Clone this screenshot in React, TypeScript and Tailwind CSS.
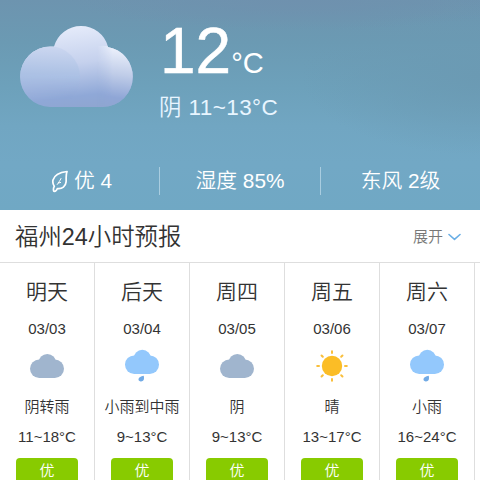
type Weather = "cloud" | "rain" | "sun";

interface Day {
  name: string;
  date: string;
  icon: Weather;
  text: string;
  temp: string;
}

const days: Day[] = [
  { name: "明天", date: "03/03", icon: "cloud", text: "阴转雨", temp: "11~18°C" },
  { name: "后天", date: "03/04", icon: "rain", text: "小雨到中雨", temp: "9~13°C" },
  { name: "周四", date: "03/05", icon: "cloud", text: "阴", temp: "9~13°C" },
  { name: "周五", date: "03/06", icon: "sun", text: "晴", temp: "13~17°C" },
  { name: "周六", date: "03/07", icon: "rain", text: "小雨", temp: "16~24°C" },
];

function WeatherIcon({ kind }: { kind: Weather }) {
  if (kind === "sun") {
    return (
      <svg width="38" height="36" viewBox="0 0 38 36">
        <circle cx="19" cy="18" r="10.200" fill="#fbbd26" />
        <g stroke="#f9bf3c" strokeWidth="2" strokeLinecap="round">
          {[0, 45, 90, 135, 180, 225, 270, 315].map((a) => (
            <path key={a} d="M19 5V3.200" transform={`rotate(${a} 19 18)`} />
          ))}
        </g>
      </svg>
    );
  }
  const rain = kind === "rain";
  return (
    <svg width="38" height="36" viewBox="0 0 38 36">
      <g transform={rain ? "translate(0 -2.600)" : "translate(0 1.500)"} fill={rain ? "#93c8fc" : "#a0b5ce"}>
        <circle cx="19.300" cy="13.200" r="8.800" />
        <rect x="2" y="10" width="34" height="18.500" rx="9.200" />
      </g>
      {rain && <path d="M20.700 27.700c1 3.600-.4 6-3.100 5.700-3.400-.5-3-4.700 3.100-5.700z" fill="#71aae5" />}
    </svg>
  );
}

function BigCloud() {
  return (
    <svg width="116" height="86" viewBox="18 24 116 86">
      <defs>
        <linearGradient id="mid" gradientUnits="userSpaceOnUse" x1="74" y1="26" x2="84" y2="108">
          <stop offset="0" stopColor="#e5ebfa" />
          <stop offset=".45" stopColor="#c5d1ed" />
          <stop offset=".85" stopColor="#8fa8d7" />
          <stop offset="1" stopColor="#8fa6d1" />
        </linearGradient>
        <linearGradient id="left" gradientUnits="userSpaceOnUse" x1="52" y1="46" x2="50" y2="108">
          <stop offset="0" stopColor="#ccd7f0" />
          <stop offset=".5" stopColor="#a9bfe3" />
          <stop offset=".8" stopColor="#8ea7d7" />
          <stop offset="1" stopColor="#8fa6d1" />
        </linearGradient>
        <linearGradient id="right" gradientUnits="userSpaceOnUse" x1="116" y1="46" x2="108" y2="108">
          <stop offset="0" stopColor="#eff3fd" />
          <stop offset=".45" stopColor="#bfcce8" />
          <stop offset=".82" stopColor="#8fa6d6" />
          <stop offset="1" stopColor="#8fa6d1" />
        </linearGradient>
        <linearGradient id="rightFade" gradientUnits="userSpaceOnUse" x1="97" y1="0" x2="113" y2="0">
          <stop offset="0" stopColor="#000" />
          <stop offset="1" stopColor="#fff" />
        </linearGradient>
        <linearGradient id="leftFade" gradientUnits="userSpaceOnUse" x1="0" y1="74" x2="0" y2="100">
          <stop offset="0" stopColor="#fff" />
          <stop offset="1" stopColor="#000" />
        </linearGradient>
        <mask id="rightMask" maskUnits="userSpaceOnUse" x="18" y="24" width="116" height="86">
          <rect x="18" y="24" width="116" height="86" fill="url(#rightFade)" />
        </mask>
        <mask id="leftMask" maskUnits="userSpaceOnUse" x="18" y="24" width="116" height="86">
          <rect x="18" y="24" width="116" height="86" fill="url(#leftFade)" />
        </mask>
        <clipPath id="body">
          <circle cx="81" cy="54" r="28" />
          <circle cx="50.500" cy="76.700" r="30.300" />
          <circle cx="102.500" cy="76.700" r="30.300" />
          <rect x="50" y="62" width="53" height="45" />
        </clipPath>
      </defs>
      <g clipPath="url(#body)">
        <rect x="18" y="24" width="116" height="86" fill="url(#mid)" />
        <circle cx="102.500" cy="76.700" r="31" fill="url(#right)" mask="url(#rightMask)" />
        <circle cx="49.500" cy="76.700" r="30.500" fill="url(#left)" mask="url(#leftMask)" />
      </g>
    </svg>
  );
}

function Leaf() {
  return (
    <svg className="mt-0.5" width="18" height="23" viewBox="0 0 18 23" fill="none" stroke="#fff" strokeWidth="1.700" strokeLinecap="round" strokeLinejoin="round">
      <path d="M16 1.500C10 2.200 3.500 4.500 2 10c-.5 2.500-.1 4.400 1.300 6.200C2.200 18 2.200 19.500 2.800 21.300c1.300.4 2.700-.6 3.600-2.800 4.800.7 8.300-2.300 8.700-6.700.3-3.500-.5-6.500.9-10.300z" />
      <path d="M6.200 14.500c1.300-1.800 2.600-3.500 3.800-6M7.200 13l2.400-.5" strokeWidth="1" />
    </svg>
  );
}

export default function App() {
  return (
    <div className="h-[480px] w-[480px] overflow-hidden bg-white font-['Liberation_Sans','Noto_Sans_CJK_SC',sans-serif] font-[350] text-[#333]">
      <header className="flex h-[210px] flex-col bg-[radial-gradient(ellipse_230px_30px_at_300px_0px,#6f91ae_0%,transparent_100%),radial-gradient(ellipse_180px_80px_at_480px_75px,#6b9ab3_0%,transparent_100%),linear-gradient(180deg,#6d94af_0%,#6b9ab3_20%,#6da1bb_42%,#71a6c2_60%,#72a8c5_78%,#70a8c4_100%)] text-white">
        <div className="flex h-[151px] pt-6 pl-[18px]">
          <BigCloud />
          <div className="ml-[25px] whitespace-nowrap">
            <div className="flex h-[62px] items-baseline pl-px leading-[54px]">
              <span className="text-[64px] [-webkit-text-stroke:0.5px_white]">12</span>
              <span className="text-[29px]">°C</span>
            </div>
            <div className="text-[22.500px] leading-[43px] tracking-[0.4px] text-[#e8f5ff]">阴 11~13°C</div>
          </div>
        </div>
        <div className="flex h-[59px] items-center text-[20.800px]">
          <div className="flex w-[159px] items-center pl-[51px]">
            <Leaf />
            <span className="ml-[5px]">优 4</span>
          </div>
          <div className="h-7 w-px bg-[#a9cde0]" />
          <div className="w-40 text-center">湿度 85%</div>
          <div className="h-7 w-px bg-[#a9cde0]" />
          <div className="w-[159px] text-center">东风 2级</div>
        </div>
      </header>
      <section className="flex h-[52px] items-center justify-between pr-[19px] pl-[15px]">
        <h1 className="pt-[3px] text-[23.400px] font-[350]">福州24小时预报</h1>
        <div className="flex items-center pt-0.5 text-[15px] text-[#777]">
          展开
          <svg className="ml-[5px]" width="13" height="8" viewBox="0 0 13 8" fill="none" stroke="#69aee5" strokeWidth="1.600" strokeLinecap="round" strokeLinejoin="round">
            <path d="M1 1.500l5.500 4.800 5.500-4.800" />
          </svg>
        </div>
      </section>
      <main className="flex border-t border-[#dedede]">
        {days.map((d) => (
          <div key={d.date} className="flex h-[217px] w-[95px] shrink-0 flex-col items-center border-r border-[#dedede] whitespace-nowrap">
            <div className="mt-[13px] text-[21px] leading-8">{d.name}</div>
            <div className="mt-[9px] text-[15px] leading-6">{d.date}</div>
            <div className="mt-[7px] h-9">
              <WeatherIcon kind={d.icon} />
            </div>
            <div className="mt-[11px] text-[15px] leading-6">{d.text}</div>
            <div className="mt-[6px] text-[15px] leading-6">{d.temp}</div>
            <div className="mt-[9px] h-[30px] w-[62px] rounded bg-[#88cb00] text-center text-[15px] leading-[26px] text-white">优</div>
          </div>
        ))}
      </main>
    </div>
  );
}
